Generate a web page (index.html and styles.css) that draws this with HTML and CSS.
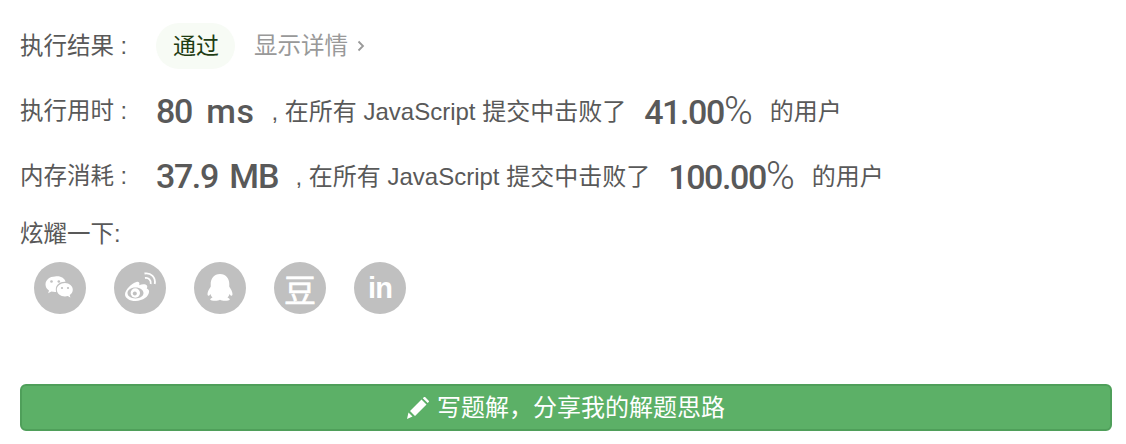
FILE: index.html
```html
<!DOCTYPE html>
<html lang="zh-CN">
  <head>
    <meta charset="UTF-8" />
    <title>提交结果</title>
    <link rel="stylesheet" href="styles.css">
  </head>
  <body>
    <div class="result">
      <div class="row">
        <span class="label">执行结果 :</span>
        <span class="status">通过</span>
        <span class="detail">显示详情</span>
        <svg class="arrow" viewBox="0 0 8 12" width="8" height="12">
          <path fill="none" stroke="#999" stroke-width="1.800" d="M1.500 1.500L6 6l-4.500 4.500"/>
        </svg>
      </div>
      <div class="row">
        <span class="label">执行用时 :</span>
        <span class="big"><span class="num">80</span> <span class="ms">ms</span></span>
        <span class="text">, 在所有 JavaScript 提交中击败了</span>
        <span class="big percent"><span class="num">41.00</span><i>%</i></span>
        <span class="text">的用户</span>
      </div>
      <div class="row">
        <span class="label">内存消耗 :</span>
        <span class="big"><span class="num">37.9</span> <span class="mb">MB</span></span>
        <span class="text">, 在所有 JavaScript 提交中击败了</span>
        <span class="big percent"><span class="num">100.00</span><i>%</i></span>
        <span class="text">的用户</span>
      </div>
      <div class="share-title">炫耀一下:</div>
      <div class="share">
        <span class="share-icon">
          <svg viewBox="0 0 52 52" width="52" height="52">
            <path fill="#fff" d="M21 14.500c-5.300 0-9.500 3.500-9.500 7.900 0 2.500 1.300 4.500 3.500 6l-.9 2.900 3.300-1.800c1.200.3 2.400.5 3.600.5.400 0 .8 0 1.200-.1-.3-.9-.4-1.700-.4-2.600 0-4.300 3.800-7.600 8.800-7.600h.9c-.9-3.500-5-6.200-10.500-5.200z"/>
            <path fill="#fff" d="M31 21c-4.500 0-8.200 3-8.200 6.700s3.700 6.700 8.200 6.700c1 0 1.900-.2 2.800-.4l2.600 1.400-.7-2.300c1.900-1.300 3.100-3.200 3.100-5.400 0-3.700-3.500-6.700-7.800-6.700z"/>
            <circle cx="17.500" cy="19.500" r="1.300" fill="#c0c0c0"/>
            <circle cx="24.800" cy="19.500" r="1.300" fill="#c0c0c0"/>
            <circle cx="28" cy="26" r="1.100" fill="#c0c0c0"/>
            <circle cx="34" cy="26" r="1.100" fill="#c0c0c0"/>
          </svg>
        </span>
        <span class="share-icon">
          <svg viewBox="0 0 52 52" width="52" height="52">
            <path fill="#fff" fill-rule="evenodd" d="M21.500 39c-6 0-10.500-3-10.500-6.800 0-3.800 6-11 11.500-12.300 2.500-.5 3.500 1 2.700 3.300 3-1.200 6.500-1.300 7.700.4.600 1 .4 2-.2 3 1.500.6 2.400 1.500 2.400 3C35 34.500 29 39 21.500 39zM21.500 25.500c-4.800 0-8 2.500-8 5.600s3.200 5.400 8 5.400 8-2.300 8-5.400-3.200-5.600-8-5.600z"/>
            <circle cx="21.300" cy="31" r="4.700" fill="#fff"/>
            <circle cx="20.800" cy="31.400" r="2" fill="#c0c0c0"/>
            <path fill="none" stroke="#fff" stroke-width="1.800" d="M31 16c3.500-.7 6.500 2.500 5.700 6M30.500 11.500c6.500-1.200 11.500 4 10.200 10.500"/>
          </svg>
        </span>
        <span class="share-icon">
          <svg viewBox="0 0 52 52" width="52" height="52">
            <path fill="#fff" d="M26 12c-6 0-9.300 4.600-9.300 10 0 1 .1 2 0 2.800-1.500 2-3.200 5-3.200 7.300 0 1.300.5 1.800 1 1.700.7 0 1.500-1 2-1.800.3 1.300 1 2.600 2 3.400-1.300.5-2.300 1.300-2.300 2.100 0 .9 2.500 1.300 5 1.300 2 0 3.500-.4 4.800-1 1.300.6 2.800 1 4.800 1 2.500 0 5-.4 5-1.300 0-.8-1-1.600-2.300-2.100 1-.8 1.700-2.100 2-3.400.5.800 1.300 1.800 2 1.800.5.100 1-.4 1-1.700 0-2.300-1.700-5.300-3.200-7.300-.1-.8 0-1.800 0-2.800 0-5.400-3.300-10-9.300-10z"/>
          </svg>
        </span>
        <span class="share-icon douban">豆</span>
        <span class="share-icon linkedin">in</span>
      </div>
      <button class="solution" type="button">
        <svg viewBox="0 0 22 22" width="22" height="22">
          <path fill="#fff" d="M0 22l1.500-6.500L5.500 19.500zM3 14L14.500 2.500l5 5L8 19zM15.800 1.200l1-1c.5-.4 1.100-.4 1.500 0l3.400 3.500c.4.400.4 1 0 1.400l-1 1z"/>
        </svg>
        <span class="solution-text">写题解，分享我的解题思路</span>
      </button>
    </div>
  </body>
</html>
```

FILE: styles.css
```css
* {
  padding: 0;
  margin: 0;
  box-sizing: border-box;
}

body {
  background-color: #fff;
  color: #595959;
  font-family: "Liberation Sans", "Noto Sans CJK SC", sans-serif;
  font-size: 23.500px;
}

.result {
  padding: 23px 14px 0 20px;
}

.row {
  display: flex;
  align-items: center;
  height: 46px;
  margin-bottom: 19px;
  white-space: nowrap;
}

.label {
  width: 136px;
  flex-shrink: 0;
  padding-bottom: 4px;
}

.status {
  height: 46px;
  line-height: 46px;
  padding: 0 16px 0 17px;
  border-radius: 23px;
  background-color: #f7fbf5;
  color: #1f3d13;
  font-size: 23px;
}

.detail {
  margin-left: 19px;
  padding-bottom: 4px;
  color: #999;
}

.arrow {
  margin-left: 9px;
}

.big {
  font-family: Roboto, sans-serif;
  font-size: 34px;
  font-weight: 500;
  word-spacing: 6px;
}

.num {
  letter-spacing: -1.400px;
}

.ms {
  letter-spacing: 0.500px;
}

.mb {
  margin-left: -3px;
  letter-spacing: -1px;
}

.text {
  margin-left: 17px;
  padding-bottom: 3px;
  font-size: 24px;
}

.percent {
  margin-left: 18px;
}

.percent i {
  font-size: 39px;
  font-style: normal;
  font-weight: 300;
}

.share-title {
  height: 36px;
  line-height: 36px;
  margin-top: -2px;
}

.share {
  display: flex;
  gap: 28px;
  margin-top: 10px;
  padding-left: 14px;
}

.share-icon {
  display: flex;
  justify-content: center;
  align-items: center;
  width: 52px;
  height: 52px;
  border-radius: 50%;
  background-color: #c0c0c0;
  color: #fff;
}

.douban {
  font-size: 32px;
  font-weight: 400;
  -webkit-text-stroke: 0.600px #fff;
}

.linkedin {
  font-size: 29px;
  font-weight: 700;
  letter-spacing: -1px;
}

.solution {
  display: flex;
  justify-content: center;
  align-items: center;
  gap: 8px;
  width: 100%;
  height: 47px;
  margin-top: 70px;
  border: 2px solid #4f9f5a;
  border-radius: 6px;
  background-color: #5cb067;
  color: #fff;
  font-family: inherit;
  font-size: 24px;
}

.solution-text {
  padding-bottom: 4px;
}
```
